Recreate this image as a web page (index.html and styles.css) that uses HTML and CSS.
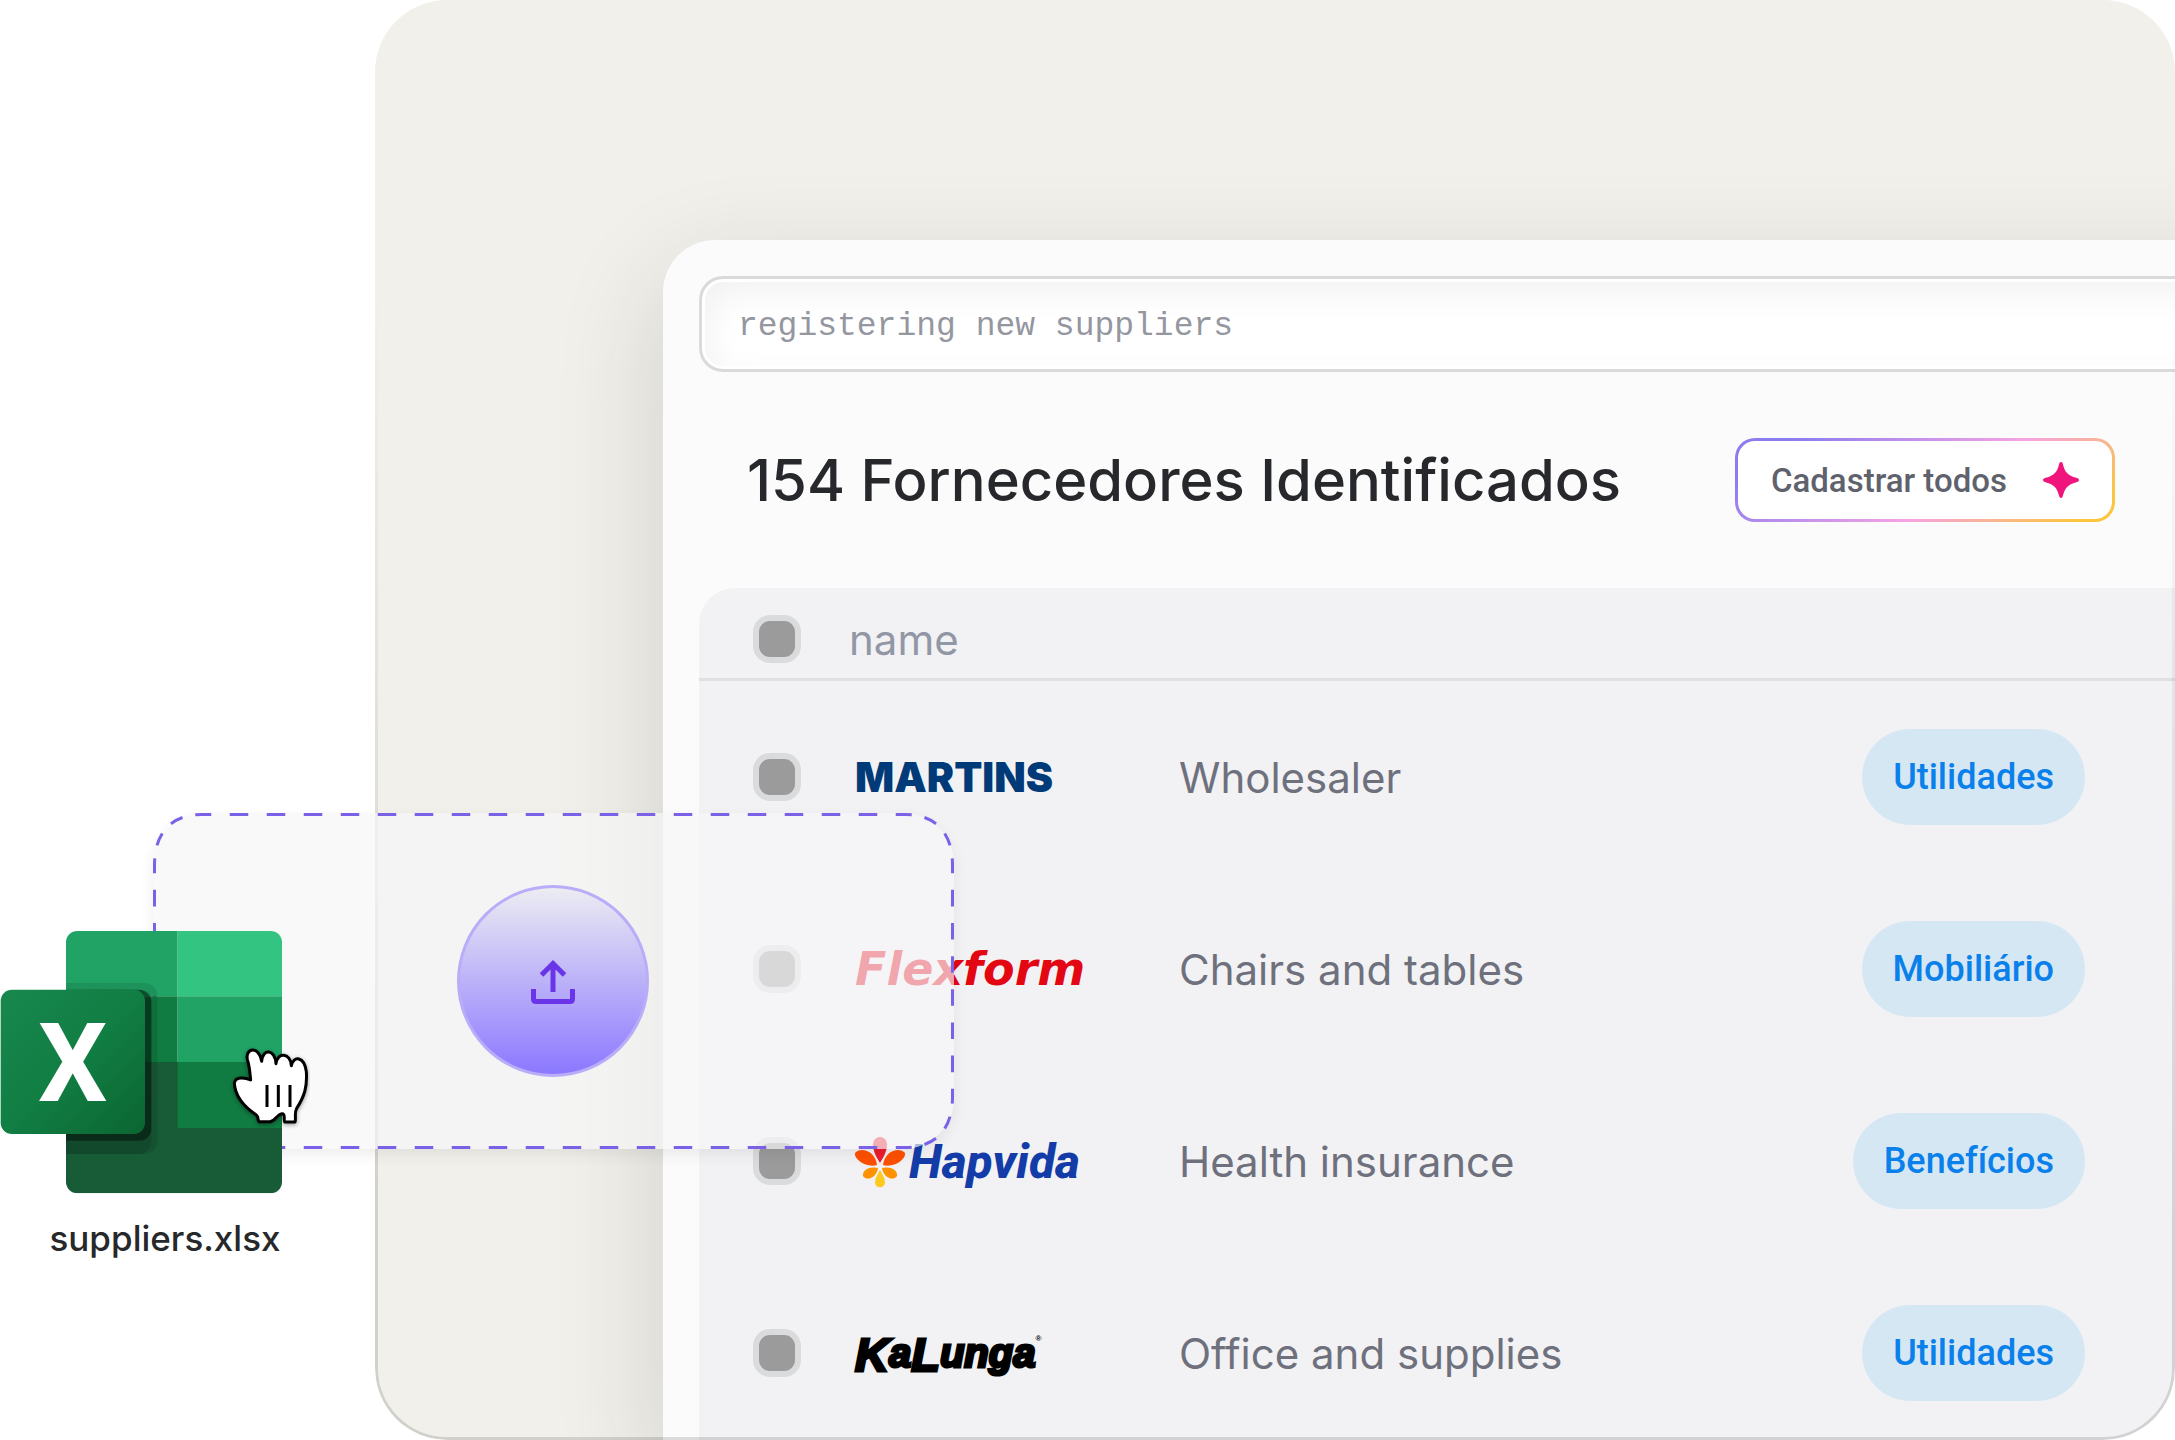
FILE: index.html
```
<!DOCTYPE html>
<html lang="pt-BR">
<head>
    <meta charset="UTF-8">
    <meta name="viewport" content="width=device-width, initial-scale=1.0">
    <title>Fornecedores</title>
    <link rel="stylesheet" href="styles.css">
</head>
<body>
<div class="stage">
    <main class="panel">
        <section class="card">
            <input class="search" type="text" aria-label="Task" value="registering new suppliers">

            <header class="card-header">
                <h1>154 Fornecedores Identificados</h1>
                <button class="register-btn" type="button">
                    Cadastrar todos
                    <svg width="36" height="36" viewBox="0 0 36 36" aria-hidden="true">
                        <path fill="#f0147d" d="M18 0c1.200 0 1.600.8 2 2.400 2 7.600 4.400 10.800 13.400 13.400 1.800.6 2.600 1 2.600 2.200s-.8 1.600-2.600 2.200C24.400 22.800 22 26 20 33.600c-.4 1.600-.8 2.400-2 2.400s-1.600-.8-2-2.400C14 26 11.600 22.800 2.600 20.200.8 19.600 0 19.200 0 18s.8-1.600 2.600-2.200C11.600 13.200 14 10 16 2.400 16.400.8 16.800 0 18 0z"/>
                    </svg>
                </button>
            </header>

            <table class="suppliers">
                <thead>
                    <tr>
                        <th class="check-cell"><input type="checkbox" aria-label="Select all"></th>
                        <th class="name-cell" colspan="3">name</th>
                    </tr>
                </thead>
                <tbody>
                    <tr>
                        <td class="check-cell"><input type="checkbox" aria-label="Martins"></td>
                        <td class="logo-cell">
                            <svg class="logo" width="240" height="72" viewBox="0 0 240 72">
                                <text class="martins" x="6" y="51">MARTINS</text>
                            </svg>
                        </td>
                        <td>Wholesaler</td>
                        <td class="tag-cell"><span class="tag">Utilidades</span></td>
                    </tr>
                    <tr>
                        <td class="check-cell"><input type="checkbox" aria-label="Flexform"></td>
                        <td class="logo-cell">
                            <svg class="logo" width="240" height="72" viewBox="0 0 240 72">
                                <text class="flexform" x="6" y="52">Flexform</text>
                            </svg>
                        </td>
                        <td>Chairs and tables</td>
                        <td class="tag-cell"><span class="tag">Mobiliário</span></td>
                    </tr>
                    <tr>
                        <td class="check-cell"><input type="checkbox" aria-label="Hapvida"></td>
                        <td class="logo-cell">
                            <svg class="logo" width="240" height="72" viewBox="0 0 240 72">
                                <!-- flower -->
                                <path fill="#ed1c2e" d="M31 38c-3-5-7-11-7-19a7 7 0 0 1 14 0c0 8-4 14-7 19z"/>
                                <path fill="#ff5000" d="M28 40C18 43 5 35 6 28c5-6 20-3 22 12z"/>
                                <path fill="#ff5000" d="M34 40c10 3 23-5 22-12-5-6-20-3-22 12z"/>
                                <path fill="#ff9200" d="M29 43c-7-2-16 1-15 8 4 6 14 1 15-8z"/>
                                <path fill="#ff9200" d="M33 43c7-2 16 1 15 8-4 6-14 1-15-8z"/>
                                <path fill="#ffc91f" d="M31 45c2 4 5 8 5 12 0 7-10 7-10 0 0-4 3-8 5-12z"/>
                                <text class="hapvida" x="60" y="53">Hapvida</text>
                            </svg>
                        </td>
                        <td>Health insurance</td>
                        <td class="tag-cell"><span class="tag">Benefícios</span></td>
                    </tr>
                    <tr>
                        <td class="check-cell"><input type="checkbox" aria-label="Kalunga"></td>
                        <td class="logo-cell">
                            <svg class="logo" width="240" height="72" viewBox="0 0 240 72">
                                <text class="kalunga" x="6" y="54"><tspan class="tall">K</tspan><tspan dy="-4">a</tspan><tspan class="tall" dy="4">L</tspan><tspan dy="-4">unga</tspan><tspan class="registered" dy="-26">®</tspan></text>
                            </svg>
                        </td>
                        <td>Office and supplies</td>
                        <td class="tag-cell"><span class="tag">Utilidades</span></td>
                    </tr>
                </tbody>
            </table>
        </section>
    </main>

    <div class="dropzone">
        <!-- each side is dashed on its own so the corners stay even -->
        <svg class="dashes" width="801" height="336" viewBox="0 0 801 336" aria-hidden="true">
            <path pathLength="38" d="M49 1.500H752"/>
            <path pathLength="38" d="M49 334.500H752"/>
            <path pathLength="14" d="M1.500 52V284"/>
            <path pathLength="14" d="M799.500 52V284"/>
            <path pathLength="6" d="M1.500 52C1.500 20 18 1.500 49 1.500"/>
            <path pathLength="6" d="M752 1.500C783 1.500 799.500 20 799.500 52"/>
            <path pathLength="6" d="M799.500 284C799.500 316 783 334.500 752 334.500"/>
            <path pathLength="6" d="M49 334.500C18 334.500 1.500 316 1.500 284"/>
        </svg>
        <button class="upload-btn" type="button" aria-label="Upload">
            <svg width="46" height="46" viewBox="0 0 46 46" aria-hidden="true">
                <path fill="none" stroke="#6a35e8" stroke-width="5" d="M23 34V5M11.500 17L23 5.500 34.500 17"/>
                <path fill="none" stroke="#6a35e8" stroke-width="5" d="M3.500 31v10q0 2.500 2.500 2.500h34q2.500 0 2.500-2.500V31"/>
            </svg>
        </button>
    </div>

    <figure class="file">
        <svg width="310" height="264" viewBox="0 90 930 792" aria-hidden="true">
            <defs>
                <linearGradient id="badge" x1="0" y1="0" x2="1" y2="1">
                    <stop offset="0" stop-color="#18884f"/>
                    <stop offset=".5" stop-color="#117e43"/>
                    <stop offset="1" stop-color="#0b6631"/>
                </linearGradient>
                <clipPath id="sheet"><rect x="198" y="93" width="648" height="787" rx="34"/></clipPath>
            </defs>
            <g clip-path="url(#sheet)">
                <path fill="#21a366" d="M198 93h335v196H198z"/>
                <path fill="#33c481" d="M533 93h313v196H533z"/>
                <path fill="#107c41" d="M198 289h335v197H198z"/>
                <path fill="#21a366" d="M533 289h313v197H533z"/>
                <path fill="#185c37" d="M198 486h648v394H198z"/>
                <path fill="#107c41" d="M533 486h313v198H533z"/>
                <rect x="40" y="249" width="432" height="513" rx="38" fill-opacity=".1"/>
                <rect x="40" y="269" width="414" height="493" rx="38" fill-opacity=".12"/>
                <rect x="20" y="269" width="434" height="453" rx="36" fill-opacity=".4"/>
            </g>
            <rect x="2" y="269" width="433" height="433" rx="34" fill="url(#badge)"/>
            <text class="badge-letter" x="218" y="603">X</text>
            <path class="hand" d="M752 540C742 535 705 525 703 550C706 594 738 624 768 644C777 651 772 660 777 665H810C827 663 832 640 848 641C857 644 850 660 854 666H885C889 655 882 640 890 625C914 588 922 560 919 515C913 469 880 466 874 497C872 458 832 455 828 491C826 448 788 443 785 484C778 436 735 444 742 478C749 500 750 520 752 540Z"/>
            <path stroke="#000" stroke-width="9" d="M801 555v66M835 555v66M870 555v66"/>
        </svg>
        <figcaption>suppliers.xlsx</figcaption>
    </figure>
</div>
</body>
</html>
```
FILE: styles.css
```
* {
    margin: 0;
    padding: 0;
    box-sizing: border-box;
}
body {
    font-family: "Inter", sans-serif;
    background-color: #fff;
    color: #27282b;
}
.stage {
    position: relative;
    height: 100vh;
    min-height: 1200px;
    padding-left: 375px;
    overflow: hidden;
}

/* panel */
.panel {
    position: relative;
    height: 100%;
    padding: 240px 0 0 288px;
    background-color: #f1f0eb;
    border-radius: 72px;
    overflow: hidden;
}
.panel::after {
    content: "";
    position: absolute;
    inset: 0;
    border: 3px solid rgba(0, 0, 0, 0.13);
    border-radius: 72px;
    -webkit-mask-image: linear-gradient(transparent 20%, #000 85%);
    mask-image: linear-gradient(transparent 20%, #000 85%);
    pointer-events: none;
}
.card {
    margin-right: -120px;
    padding: 36px 36px 0;
    background-color: #fbfbfb;
    border-radius: 52px 0 0 0;
    box-shadow: 0 36px 108px rgba(40, 40, 25, 0.16);
}
.search {
    display: block;
    width: 100%;
    height: 96px;
    padding: 4px 36px 0;
    border: 3px solid #d9dadb;
    border-radius: 24px;
    background-color: #fff;
    box-shadow: inset 0 0 0 3px #fff, inset 6px 12px 36px rgba(0, 0, 0, 0.06);
    font-family: "Liberation Mono", monospace;
    font-size: 33px;
    color: #94979f;
    outline: none;
}
.card-header {
    display: flex;
    align-items: center;
    justify-content: space-between;
    height: 216px;
    padding: 0 144px 0 48px;
}
h1 {
    font-size: 58px;
    font-weight: 500;
    white-space: nowrap;
}
.register-btn {
    display: flex;
    align-items: center;
    gap: 36px;
    height: 84px;
    padding: 0 33px;
    border: 3px solid transparent;
    border-radius: 20px;
    background: linear-gradient(#fff, #fff) padding-box,
        linear-gradient(145deg, #8b7cf0 12%, #f5a3e4 58%, #fbc63e 92%) border-box;
    font-family: "Roboto", sans-serif;
    font-size: 33px;
    font-weight: 500;
    color: #5f626d;
    white-space: nowrap;
    cursor: pointer;
}

/* table */
.suppliers {
    width: 100%;
    border-spacing: 0;
    background-color: #f2f2f4;
    border-radius: 36px 0 0 0;
    font-size: 42px;
    color: #6e717d;
}
th {
    height: 93px;
    padding-top: 12px;
    border-bottom: 3px solid #dfe0e2;
    font-weight: 400;
    text-align: left;
    color: #9297a5;
}
td {
    height: 192px;
    white-space: nowrap;
}
.check-cell {
    width: 150px;
    padding-left: 54px;
}
.logo-cell {
    width: 330px;
}
.tag-cell {
    padding-right: 174px;
    text-align: right;
}
input[type="checkbox"] {
    appearance: none;
    display: block;
    width: 48px;
    height: 48px;
    border: 6px solid #dadbdd;
    border-radius: 17px;
    background-color: #9b9b9b;
}
.tag {
    display: inline-block;
    height: 96px;
    padding: 0 31px;
    border-radius: 48px;
    background-color: #d6e7f4;
    font-family: "Roboto", sans-serif;
    font-size: 36px;
    font-weight: 500;
    line-height: 96px;
    color: #0a80ea;
}

/* supplier logos */
.logo {
    display: block;
}
.martins {
    font: 900 41px "Inter", sans-serif;
    fill: #003a78;
}
.flexform {
    font: italic 700 46px "DejaVu Sans", sans-serif;
    fill: #e30613;
}
.hapvida {
    font: italic 800 48px "Roboto", sans-serif;
    fill: #143ca8;
}
.kalunga {
    font: italic 700 40px "Liberation Sans", sans-serif;
    stroke: #000;
    stroke-width: 3;
}
.tall {
    font-size: 47px;
}
.registered {
    font-size: 8px;
    font-style: normal;
    stroke: none;
}

/* drop area */
.dropzone {
    position: absolute;
    left: 153px;
    top: 813px;
    display: flex;
    align-items: center;
    width: 801px;
    height: 336px;
    padding-left: 304px;
    background-color: rgba(246, 246, 247, 0.67);
    border-radius: 51px;
    box-shadow: 0 6px 15px rgba(0, 0, 0, 0.07);
}
.dashes {
    position: absolute;
    left: 0;
    top: 0;
    fill: none;
    stroke: #7b61e8;
    stroke-width: 3;
    stroke-dasharray: 1;
    stroke-dashoffset: 0.5;
}
.upload-btn {
    display: flex;
    align-items: center;
    justify-content: center;
    width: 192px;
    height: 192px;
    border: 3px solid #b9acf8;
    border-radius: 50%;
    background: linear-gradient(#ececf2, #8b78ff);
    cursor: pointer;
}

/* dragged file */
.file {
    position: absolute;
    left: 0;
    top: 930px;
    width: 330px;
}
.file svg {
    display: block;
}
.badge-letter {
    font: 700 328px "Roboto", sans-serif;
    fill: #fff;
    text-anchor: middle;
}
.hand {
    fill: #fff;
    stroke: #000;
    stroke-width: 9;
    stroke-linejoin: round;
    filter: drop-shadow(0 4px 6px rgba(0, 0, 0, 0.4));
}
figcaption {
    margin-top: 20px;
    font-size: 35px;
    font-weight: 500;
    line-height: 48px;
    text-align: center;
}
```
